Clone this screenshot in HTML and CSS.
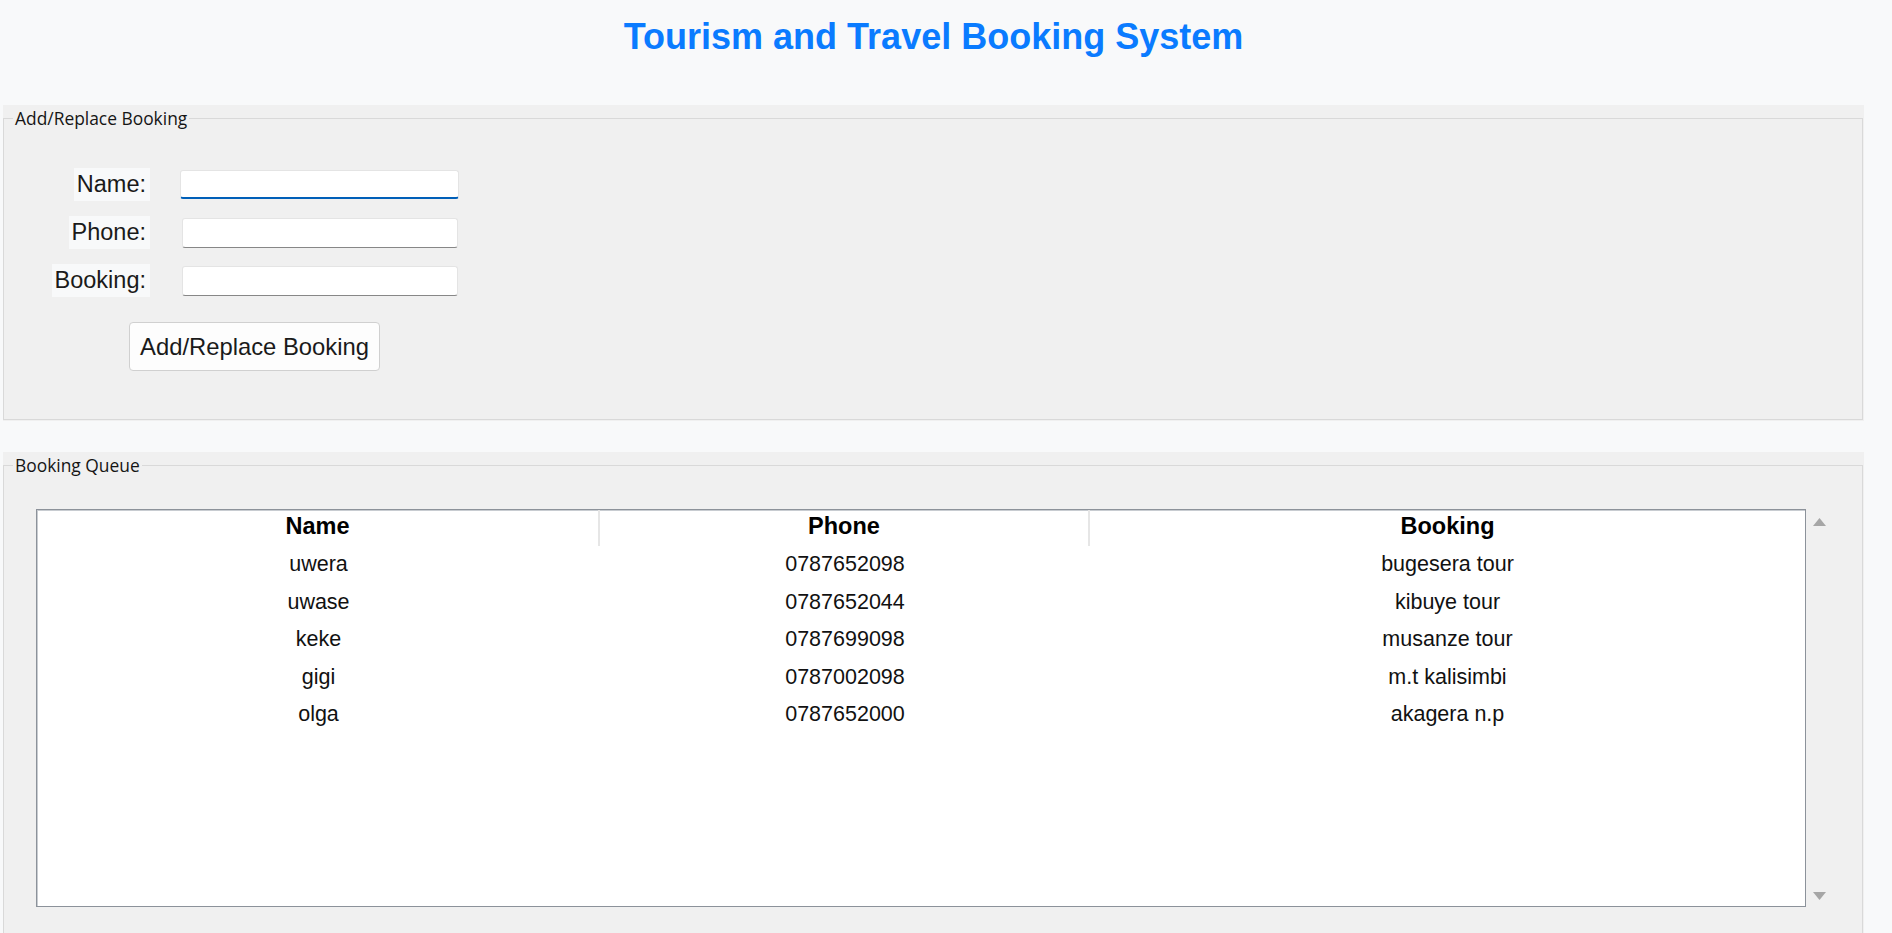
FILE: index.html
```html
<!DOCTYPE html>
<html lang="en">
<head>
<meta charset="utf-8">
<title>Tourism and Travel Booking System</title>
<link rel="stylesheet" href="styles.css">
</head>
<body>
<div class="app">
  <h1 class="title">Tourism and Travel Booking System</h1>

  <section class="panel">
    <fieldset class="group group-form">
      <legend>Add/Replace Booking</legend>
      <div class="form">
        <label class="lbl" for="f-name">Name:</label>
        <input class="field focused" id="f-name" type="text">
        <label class="lbl" for="f-phone">Phone:</label>
        <input class="field" id="f-phone" type="text">
        <label class="lbl" for="f-booking">Booking:</label>
        <input class="field" id="f-booking" type="text">
        <button class="btn" type="button">Add/Replace Booking</button>
      </div>
    </fieldset>
  </section>

  <section class="panel panel-queue">
    <fieldset class="group group-queue">
      <legend>Booking Queue</legend>
      <div class="queue">
        <div class="table">
          <div class="thead">
            <div class="th">Name</div>
            <div class="th">Phone</div>
            <div class="th last">Booking</div>
          </div>
          <div class="tr"><div class="td">uwera</div><div class="td">0787652098</div><div class="td">bugesera tour</div></div>
          <div class="tr"><div class="td">uwase</div><div class="td">0787652044</div><div class="td">kibuye tour</div></div>
          <div class="tr"><div class="td">keke</div><div class="td">0787699098</div><div class="td">musanze tour</div></div>
          <div class="tr"><div class="td">gigi</div><div class="td">0787002098</div><div class="td">m.t kalisimbi</div></div>
          <div class="tr"><div class="td">olga</div><div class="td">0787652000</div><div class="td">akagera n.p</div></div>
        </div>
        <div class="scroll">
          <svg class="arrow" width="13" height="8" viewBox="0 0 13 8"><polygon points="6.5,0 13,8 0,8" fill="#a6a6a6"/></svg>
          <svg class="arrow" width="13" height="8" viewBox="0 0 13 8"><polygon points="0,0 13,0 6.5,8" fill="#a6a6a6"/></svg>
        </div>
      </div>
    </fieldset>
  </section>
</div>
</body>
</html>
```

FILE: styles.css
```css
* { box-sizing: border-box; }

html, body {
  margin: 0;
  padding: 0;
  height: 100%;
  overflow: hidden;
}

body {
  background: #f8f9fa;
  font-family: "Liberation Sans", Arial, sans-serif;
  color: #151515;
}

.app {
  width: 1867px;
  height: 933px;
  padding: 0 3px;
  overflow: hidden;
}

.title {
  margin: 0 0 51px;
  padding-top: 20px;
  font-size: 36px;
  line-height: 34px;
  font-weight: bold;
  color: #0a7bff;
  text-align: center;
}

.panel {
  background: #f0f0f0;
  padding: 3px 1px 1px 0;
}

.panel-queue {
  margin-top: 31px;
}

.group {
  margin: 0;
  min-width: 0;
  border: 1px solid #d9d9d9;
}

.group legend {
  margin-left: 9px;
  padding: 0 2px;
  font-family: "Open Sans", "Noto Sans", sans-serif;
  font-size: 17.4px;
  line-height: 20px;
  color: #151515;
}

.group-form {
  padding: 40px 0 48px 0;
}

.group-queue {
  padding: 34px 0 40px 0;
}

/* form */
.form {
  display: grid;
  grid-template-columns: 146px 279px;
  grid-template-rows: 33px 33px 33px auto;
  column-gap: 30px;
  row-gap: 15px;
  align-items: center;
}

.lbl {
  justify-self: end;
  height: 33px;
  line-height: 33px;
  padding: 0 4px 0 3px;
  background: #f8f9fa;
  font-size: 23.5px;
  color: #1a1a1a;
}

.field {
  width: 276px;
  height: 30px;
  margin-left: 2px;
  background: #fff;
  border: 1px solid #e4e4e4;
  border-bottom: 1px solid #878787;
  border-radius: 3px;
  outline: none;
}

.field.focused {
  width: 279px;
  height: 29px;
  margin-left: 0;
  border-bottom: 2px solid #005fb8;
}

.btn {
  grid-column: 1 / span 2;
  justify-self: start;
  margin: 10px 0 0 125px;
  width: 251px;
  height: 49px;
  padding: 0;
  background: #fdfdfd;
  border: 1px solid #d0d0d0;
  border-radius: 4px;
  font-family: "Liberation Sans", Arial, sans-serif;
  font-size: 23.8px;
  color: #1a1a1a;
}

/* queue */
.queue {
  display: flex;
  padding-left: 32px;
}

.table {
  width: 1770px;
  height: 398px;
  background: #fff;
  border: 1px solid #8c929a;
  box-shadow: inset 1px 1px 0 #c8ccd1;
}

.thead, .tr {
  display: grid;
  grid-template-columns: 563px 490px 1fr;
}

.thead {
  height: 36px;
}

.th {
  border-right: 2px solid #e6e6e6;
  font-weight: bold;
  font-size: 23.5px;
  line-height: 33px;
  text-align: center;
  color: #000;
}

.th.last {
  border-right: none;
}

.tr {
  height: 37.5px;
}

.td {
  font-size: 21.5px;
  line-height: 37.5px;
  text-align: center;
  color: #111;
}

.scroll {
  width: 26px;
  display: flex;
  flex-direction: column;
  align-items: center;
  justify-content: space-between;
  padding: 9px 0 7px;
}

.arrow {
  display: block;
}
```
